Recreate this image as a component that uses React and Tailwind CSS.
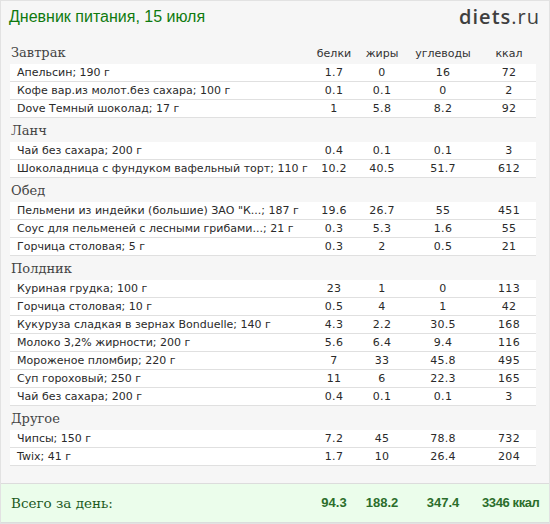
import React from 'react';

const sections = [
  {
    title: 'Завтрак',
    items: [
      ['Апельсин; 190 г', '1.7', '0', '16', '72'],
      ['Кофе вар.из молот.без сахара; 100 г', '0.1', '0.1', '0', '2'],
      ['Dove Темный шоколад; 17 г', '1', '5.8', '8.2', '92'],
    ],
  },
  {
    title: 'Ланч',
    items: [
      ['Чай без сахара; 200 г', '0.4', '0.1', '0.1', '3'],
      ['Шоколадница с фундуком вафельный торт; 110 г', '10.2', '40.5', '51.7', '612'],
    ],
  },
  {
    title: 'Обед',
    items: [
      ['Пельмени из индейки (большие) ЗАО "К...; 187 г', '19.6', '26.7', '55', '451'],
      ['Соус для пельменей с лесными грибами...; 21 г', '0.3', '5.3', '1.6', '55'],
      ['Горчица столовая; 5 г', '0.3', '2', '0.5', '21'],
    ],
  },
  {
    title: 'Полдник',
    items: [
      ['Куриная грудка; 100 г', '23', '1', '0', '113'],
      ['Горчица столовая; 10 г', '0.5', '4', '1', '42'],
      ['Кукуруза сладкая в зернах Bonduelle; 140 г', '4.3', '2.2', '30.5', '168'],
      ['Молоко 3,2% жирности; 200 г', '5.6', '6.4', '9.4', '116'],
      ['Мороженое пломбир; 220 г', '7', '33', '45.8', '495'],
      ['Суп гороховый; 250 г', '11', '6', '22.3', '165'],
      ['Чай без сахара; 200 г', '0.4', '0.1', '0.1', '3'],
    ],
  },
  {
    title: 'Другое',
    items: [
      ['Чипсы; 150 г', '7.2', '45', '78.8', '732'],
      ['Twix; 41 г', '1.7', '10', '26.4', '204'],
    ],
  },
];

const cols = 'grid grid-cols-[298px_52px_44px_78px_54px]';

const App = () => {
  return (
    <div className="w-[550px] h-[524px] bg-[#f6f6f6] border border-[#e2e2e2] flex flex-col overflow-hidden">
      {/* шапка */}
      <div className="h-[39px] flex items-start justify-between pl-[8px] pr-[9px] pt-[5px]">
        <h1 className="text-[16px] leading-[22px] text-[#0f7a0f] font-['Liberation_Sans',sans-serif]">
          Дневник питания, 15 июля
        </h1>
        <div className="text-[20px] leading-[22px] tracking-[1px] text-[#3f3f3f] font-['Open_Sans',sans-serif]">
          <span className="font-semibold">diets</span>
          <span className="font-normal">.ru</span>
        </div>
      </div>

      <div className="pl-[9px] w-[535px] font-['DejaVu_Sans',sans-serif] text-[11px] text-[#2a2a2a]">
        {sections.map((sec, i) => (
          <div key={sec.title}>
            <div className={`${cols} h-[24px] items-end pb-[2px]`}>
              <div className="pl-px text-[13px] leading-[18px] text-[#444] font-['DejaVu_Serif',serif]">
                {sec.title}
              </div>
              {i === 0 &&
                ['белки', 'жиры', 'углеводы', 'ккал'].map(h => (
                  <div key={h} className="text-center text-[#333] leading-[16px]">
                    {h}
                  </div>
                ))}
            </div>
            {sec.items.map((row, j) => (
              <div
                key={j}
                className={`${cols} h-[18px] items-center bg-white border-b border-[#e0e0e0] leading-[17px]`}
              >
                <div className="pl-[7px] whitespace-nowrap">{row[0]}</div>
                {row.slice(1).map((v, k) => (
                  <div key={k} className="text-center tracking-[0.3px]">
                    {v}
                  </div>
                ))}
              </div>
            ))}
          </div>
        ))}
      </div>

      <div className="mt-[17px] h-[40px] bg-[#ebfdeb] border-t border-b border-[#dcdcdc] flex items-center pl-[9px]">
        <div className={`${cols} w-[535px] items-center`}>
          <div className="pl-px text-[13.5px] text-[#1d5a1d] font-['DejaVu_Serif',serif]">Всего за день:</div>
          {['94.3', '188.2', '347.4'].map(v => (
            <div key={v} className="text-center font-bold text-[13px] text-[#2b6e2b] font-['Liberation_Sans',sans-serif]">
              {v}
            </div>
          ))}
          <div className="text-center font-bold text-[13px] tracking-[-0.4px] text-[#2b6e2b] font-['Liberation_Sans',sans-serif] whitespace-nowrap">
            3346 ккал
          </div>
        </div>
      </div>
    </div>
  );
};

export default App;
